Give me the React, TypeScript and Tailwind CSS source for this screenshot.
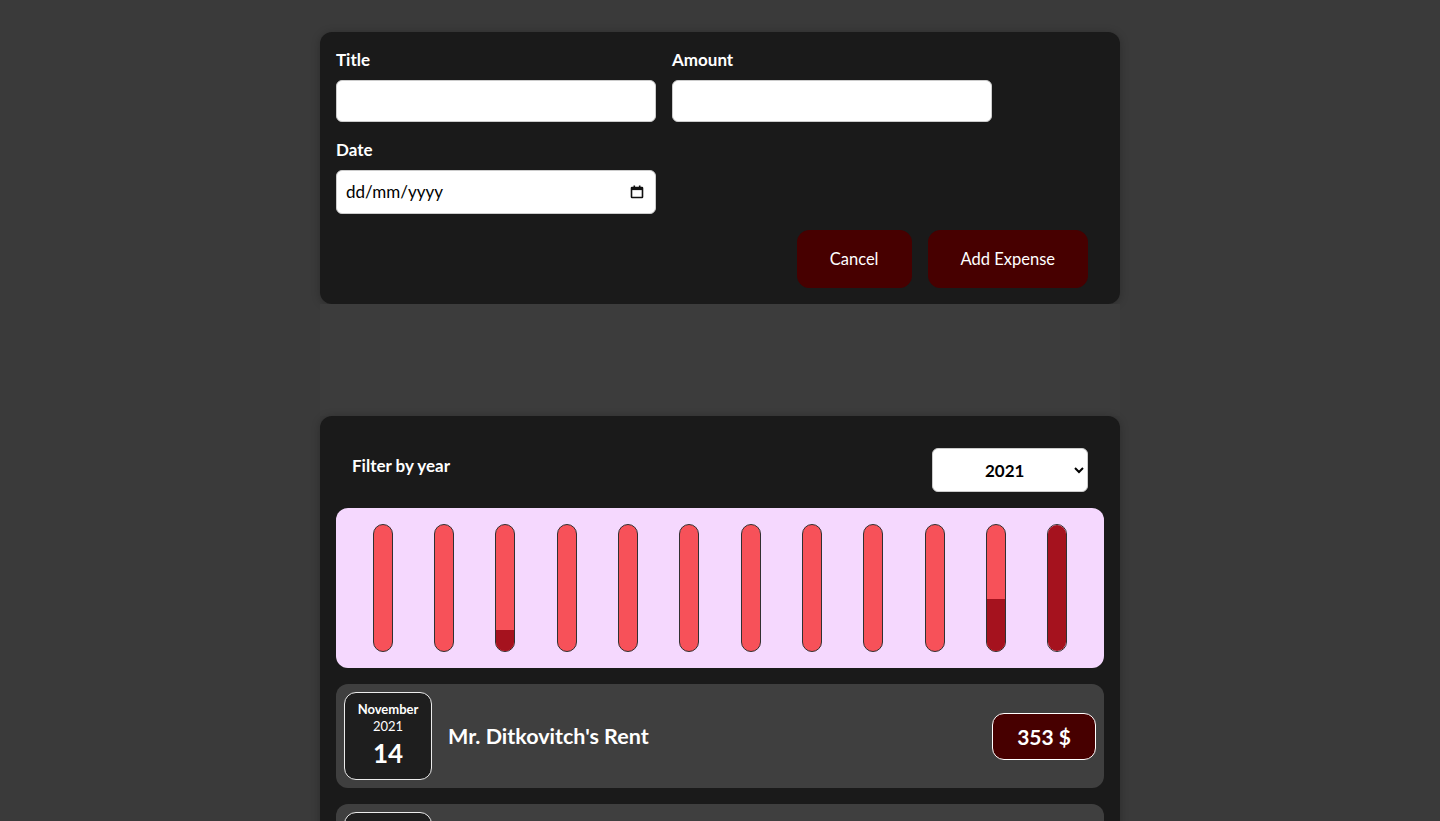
import { useState } from 'react'

const months = ['Jan', 'Feb', 'Mar', 'Apr', 'May', 'Jun', 'Jul', 'Aug', 'Sep', 'Oct', 'Nov', 'Dec']
const fills = [0, 0, 17, 0, 0, 0, 0, 0, 0, 0, 41, 100]

function ChartBar({ fill }: { fill: number }) {
  return (
    <div className="h-full flex flex-col items-center">
      <div className="h-full w-[20px] border border-[#313131] rounded-xl bg-[#f75159] overflow-hidden flex flex-col justify-end">
        <div className="bg-[#a5121e] w-full" style={{ height: `${fill}%` }} />
      </div>
    </div>
  )
}

function CalendarIcon() {
  return (
    <svg width="14" height="14" viewBox="0 0 14 14" fill="none">
      <rect x="1.5" y="2.5" width="11" height="10" rx="0.5" stroke="#111" strokeWidth="1.6" />
      <rect x="1.5" y="2.5" width="11" height="2.6" fill="#111" />
      <rect x="3.5" y="0.5" width="1.6" height="2.5" fill="#111" />
      <rect x="8.9" y="0.5" width="1.6" height="2.5" fill="#111" />
    </svg>
  )
}

function ExpenseItem({ month, year, day, title, amount }: { month: string; year: string; day: string; title: string; amount: number }) {
  return (
    <div className="my-4 p-2 rounded-xl bg-[#3f3f3f] flex items-center justify-between">
      <div className="w-[88px] h-[88px] border border-[#ececec] bg-[#1e1e1e] rounded-xl flex flex-col items-center justify-center">
        <div className="text-[13px] font-bold leading-[17px]">{month}</div>
        <div className="text-[13px] leading-[17px]">{year}</div>
        <div className="text-[26px] font-bold leading-[36px]">{day}</div>
      </div>
      <div className="flex-1 flex items-center">
        <h2 className="flex-1 mx-4 text-[21.5px] leading-7 font-bold">{title}</h2>
        <div className="text-[21px] leading-[29px] font-bold bg-[#470000] border border-white rounded-xl px-6 py-2">{amount} $</div>
      </div>
    </div>
  )
}

export default function App() {
  const [year, setYear] = useState('2021')

  return (
    <div className="min-h-screen bg-[#3a3a3a] pt-8 font-['Lato',sans-serif] text-white">
      <div className="w-[800px] mx-auto bg-[#1a1a1a] rounded-xl p-4 shadow-[0_1px_8px_rgba(0,0,0,0.25)]">
        <div className="flex flex-wrap gap-4 text-left">
          <div className="w-[320px]">
            <label className="block font-bold mb-2 leading-6 text-[17px]">Title</label>
            <input className="w-full h-[42px] bg-white rounded-md border border-[#ccc] px-2 text-black" />
          </div>
          <div className="w-[320px]">
            <label className="block font-bold mb-2 leading-6 text-[17px]">Amount</label>
            <input className="w-full h-[42px] bg-white rounded-md border border-[#ccc] px-2 text-black" />
          </div>
          <div className="w-[320px]">
            <label className="block font-bold mb-2 leading-6 text-[17px]">Date</label>
            <div className="w-full h-[44px] bg-white rounded-md border border-[#ccc] pl-[9px] pr-[11px] flex items-center justify-between text-black">
              <span className="text-[17px]">dd/mm/yyyy</span>
              <CalendarIcon />
            </div>
          </div>
        </div>
        <div className="flex justify-end mt-4">
          <button className="px-8 py-4 leading-6 text-[16.5px] bg-[#470000] border border-[#470000] rounded-xl mr-4 text-white">Cancel</button>
          <button className="px-8 py-4 leading-6 text-[16.5px] bg-[#470000] border border-[#470000] rounded-xl mr-4 text-white">Add Expense</button>
        </div>
      </div>

      <div className="w-[800px] mx-auto h-[112px] bg-[#3c3c3c]" />

      <div className="w-[800px] mx-auto bg-[#1a1a1a] rounded-xl p-4 shadow-[0_1px_8px_rgba(0,0,0,0.25)]">
        <div className="px-4 my-4 flex items-center justify-between">
          <label className="font-bold text-[17px] mb-2">Filter by year</label>
          <select
            value={year}
            onChange={(e) => setYear(e.target.value)}
            className="w-[156px] h-[44px] bg-white text-black text-[17px] font-bold rounded-md border border-[#ccc] pl-12 pr-2 text-left"
          >
            <option value="2022">2022</option>
            <option value="2021">2021</option>
            <option value="2020">2020</option>
            <option value="2019">2019</option>
          </select>
        </div>

        <div className="h-[160px] p-4 rounded-xl bg-[#f5d8fe] flex justify-around">
          {months.map((m, i) => (
            <ChartBar key={m} fill={fills[i]} />
          ))}
        </div>

        <ExpenseItem month="November" year="2021" day="14" title="Mr. Ditkovitch's Rent" amount={353} />
        <ExpenseItem month="March" year="2021" day="28" title="Car Insurance" amount={294} />
      </div>
    </div>
  )
}
